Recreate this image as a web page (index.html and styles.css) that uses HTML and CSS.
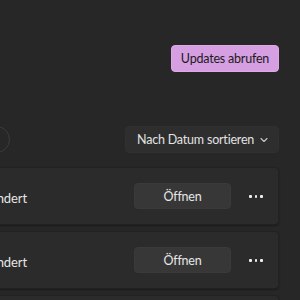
FILE: index.html
```html
<!DOCTYPE html>
<html lang="de">
<head>
<meta charset="utf-8">
<link rel="stylesheet" href="styles.css">
</head>
<body>
<div class="page">
  <div class="header">
    <button class="accent-btn">Updates abrufen</button>
  </div>
  <div class="toolbar">
    <span class="round"></span>
    <button class="sort-btn"><span>Nach Datum sortieren</span>
      <svg class="chev" width="10" height="10" viewBox="0 0 10 10"><path d="M2 3.5 L5 6.5 L8 3.5" fill="none" stroke="#c8c8c8" stroke-width="1.1" stroke-linecap="round" stroke-linejoin="round"/></svg>
    </button>
  </div>
  <div class="list">
    <div class="card">
      <div class="info"><span class="meta">geändert</span></div>
      <button class="open-btn">Öffnen</button>
      <span class="more"><i></i><i></i><i></i></span>
    </div>
    <div class="card">
      <div class="info"><span class="meta">geändert</span></div>
      <button class="open-btn">Öffnen</button>
      <span class="more"><i></i><i></i><i></i></span>
    </div>
    <div class="card">
      <div class="info"><span class="meta">geändert</span></div>
      <button class="open-btn">Öffnen</button>
      <span class="more"><i></i><i></i><i></i></span>
    </div>
  </div>
</div>
</body>
</html>
```
FILE: styles.css
```css
html, body {
  margin: 0;
  padding: 0;
  background: #272727;
  overflow: hidden;
  height: 300px;
}
body {
  font-family: Lato, "Noto Sans", sans-serif;
  color: #e4e4e4;
}
.page {
  padding-right: 21px;
}
button {
  font-family: inherit;
  border: none;
  cursor: pointer;
  white-space: nowrap;
}
.header {
  display: flex;
  justify-content: flex-end;
  padding-top: 45px;
}
.accent-btn {
  box-sizing: border-box;
  width: 108px;
  height: 27px;
  background: #d69fe2;
  color: #1b1b1b;
  font-size: 12.5px;
  letter-spacing: -0.2px;
  border-radius: 4px;
  padding: 0;
  border: 1px solid #dba9e6;
}
.toolbar {
  display: flex;
  align-items: center;
  justify-content: space-between;
  margin-top: 54px;
  height: 27px;
}
.round {
  width: 25px;
  height: 25px;
  border-radius: 50%;
  border: 1px solid #3d3d3d;
  margin-left: -17px;
}
.sort-btn {
  box-sizing: border-box;
  display: flex;
  align-items: center;
  justify-content: space-between;
  height: 27px;
  width: 154px;
  padding: 0 9px 0 11px;
  background: #2e2e2e;
  color: #e2e2e2;
  font-size: 12.5px;
  letter-spacing: -0.2px;
  border-radius: 4px;
  border: 1px solid #303030;
}
.chev {
  flex: none;
}
.list {
  margin-top: 14px;
  margin-left: -20px;
  display: flex;
  flex-direction: column;
  gap: 6px;
}
.card {
  box-sizing: border-box;
  display: flex;
  align-items: center;
  height: 58px;
  background: #2b2b2b;
  border: 1px solid #222;
  border-radius: 4px;
  box-shadow: 0 1px 2px rgba(0,0,0,0.35);
  padding-right: 15px;
}
.info {
  flex: 1;
  overflow: hidden;
  white-space: nowrap;
}
.meta {
  display: inline-block;
  margin-left: -4px;
  font-size: 13px;
  letter-spacing: -0.1px;
  color: #e6e6e6;
}
.open-btn {
  box-sizing: border-box;
  width: 97px;
  height: 26px;
  background: #373737;
  color: #e6e6e6;
  font-size: 12.5px;
  letter-spacing: -0.2px;
  border-radius: 4px;
  border: 1px solid #3a3a3a;
  padding: 0;
}
.more {
  display: flex;
  gap: 3px;
  margin-left: 18px;
  width: 14px;
}
.more i {
  width: 3px;
  height: 3px;
  background: #f0f0f0;
  border-radius: 1px;
}
```
